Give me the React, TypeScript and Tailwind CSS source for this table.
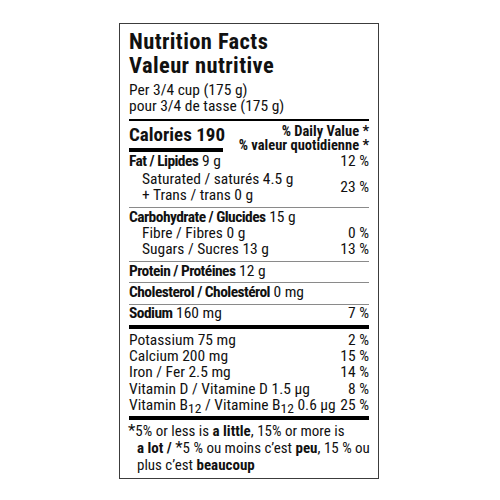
const B = ({ children }: { children: React.ReactNode }) => (
  <b className="tracking-[-0.55px]">{children}</b>
);

const Row = ({ label, value, pct, indent }: { label: React.ReactNode; value?: React.ReactNode; pct?: string; indent?: boolean }) => (
  <div className={`flex justify-between leading-[16.3px] ${indent ? "pl-[13px]" : ""}`}>
    <span className="whitespace-nowrap">
      {label} {value}
    </span>
    {pct && <span className="whitespace-nowrap">{pct}</span>}
  </div>
);

const Thin = () => <div className="mb-[0.5px] mt-[3.5px] h-px bg-[#8a8a8a]" />;

const Sub = () => <span className="relative top-[3px] text-[13.5px]">12</span>;

const Star = () => <span className="text-[17px]">*</span>;

export default function App() {
  return (
    <div className="h-[500px] w-[500px] bg-white pl-[119px] pt-[23px] text-[#111] [font-family:'Roboto_Condensed','Roboto',sans-serif] [font-stretch:75%]">
      <div className="w-[260px] border border-[#3c3c3c] px-[9px] pb-[5px] pt-[5px] text-[15.5px]">
        <div className="text-[22.5px] font-bold leading-[24px] tracking-[0.4px]">
          Nutrition Facts
          <br />
          Valeur nutritive
        </div>
        <div className="mt-[5px] leading-[16px]">
          Per 3/4 cup (175 g)
          <br />
          pour 3/4 de tasse (175 g)
        </div>
        <div className="mt-[5px] h-[2px] bg-black" />

        <div className="mt-[3.5px] flex h-[27.5px] items-start justify-between">
          <div>
            <div className="text-[19px] font-bold leading-[20px]">Calories 190</div>
            <div className="mt-[3.5px] h-[4px] w-[94px] bg-black" />
          </div>
          <div className="mt-[0.5px] text-right text-[14.5px] font-bold leading-[14px]">
            % Daily Value *
            <br />% valeur quotidienne *
          </div>
        </div>

        <div className="mt-[1.3px]">
          <Row label={<B>Fat / Lipides</B>} value="9 g" pct="12 %" />
          <div className="mt-[1.5px] flex items-center justify-between">
            <div className="pl-[13px] leading-[16.3px]">
              Saturated / saturés 4.5 g
              <br />+ Trans / trans 0 g
            </div>
            <span>23 %</span>
          </div>
        </div>
        <Thin />
        <Row label={<B>Carbohydrate / Glucides</B>} value="15 g" />
        <Row indent label="Fibre / Fibres" value="0 g" pct="0 %" />
        <Row indent label="Sugars / Sucres" value="13 g" pct="13 %" />
        <Thin />
        <Row label={<B>Protein / Protéines</B>} value="12 g" />
        <Thin />
        <Row label={<B>Cholesterol / Cholestérol</B>} value="0 mg" />
        <Thin />
        <Row label={<B>Sodium</B>} value="160 mg" pct="7 %" />
        <div className="mb-[2.4px] mt-[4px] h-[4px] bg-black" />
        <Row label="Potassium" value="75 mg" pct="2 %" />
        <Row label="Calcium" value="200 mg" pct="15 %" />
        <Row label="Iron / Fer" value="2.5 mg" pct="14 %" />
        <Row label="Vitamin D / Vitamine D" value="1.5 µg" pct="8 %" />
        <Row
          label={
            <>
              Vitamin B<Sub /> / Vitamine B<Sub />
            </>
          }
          value="0.6 µg"
          pct="25 %"
        />
        <div className="mb-[1.5px] mt-[3px] h-[4px] bg-black" />
        <div className="whitespace-nowrap text-[15px] leading-[16.5px]">
          <div className="-ml-px">
            <Star />5% or less is <b>a little</b>, 15% or more is
          </div>
          <div className="pl-[8px]">
            <b>a lot /</b> <Star />5 % ou moins c’est <b>peu</b>, 15 % ou
          </div>
          <div className="pl-[8px]">
            plus c’est <b>beaucoup</b>
          </div>
        </div>
      </div>
    </div>
  );
}
